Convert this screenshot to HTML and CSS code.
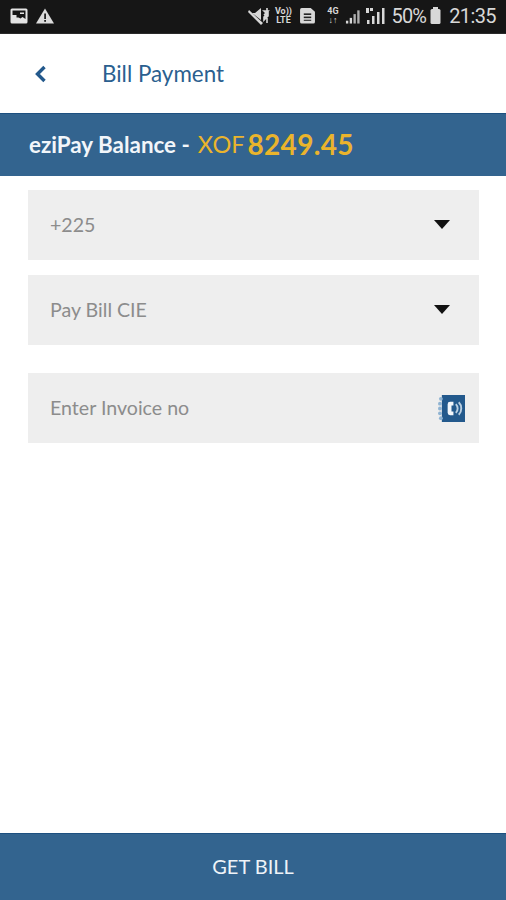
FILE: index.html
```html
<!DOCTYPE html>
<html lang="en">
<head>
<meta charset="utf-8">
<title>Bill Payment</title>
<link rel="stylesheet" href="styles.css">
</head>
<body>
<div class="screen">
  <div class="statusbar">
    <div class="status-left">
      <svg class="ic-image" viewBox="0 0 18 16"><rect x="0.5" y="0.5" width="17" height="15" rx="1.5" fill="#e4e4e4"/><path d="M2.500 2.500h13v8.500l-3-2-2 1.500-2-1H6.500V7h-4z" fill="#161616"/><rect x="10" y="4.500" width="4" height="1.500" fill="#e4e4e4"/></svg>
      <svg class="ic-warn" viewBox="0 0 18 16"><path d="M9 0.5L18 15.500H0z" fill="#dcdcdc"/><rect x="8.200" y="5.500" width="1.800" height="5.500" fill="#222"/><rect x="8.200" y="12" width="1.800" height="1.800" fill="#222"/></svg>
    </div>
    <div class="status-right">
      <svg class="ic-mute" viewBox="0 0 22 18"><path d="M1 3l14 13-2 2L0 5z" fill="#d8d8d8"/><path d="M4 6h3l6-5v12z" fill="#d8d8d8"/><path d="M16 4l2 2-2 2 4-4zM16 10l4-4v3l-4 4zM19 1v3M19 11v5" stroke="#d8d8d8" stroke-width="1.600" fill="#d8d8d8"/></svg>
      <span class="volte">Vo))<br>LTE</span>
      <svg class="ic-sim" viewBox="0 0 16 16"><path d="M1 2.500A1.500 1.500 0 0 1 2.500 1H11l4 3.500V14a1.500 1.500 0 0 1-1.500 1.500h-11A1.500 1.500 0 0 1 1 14z" fill="#d8d8d8"/><rect x="4.500" y="6" width="7" height="1.500" fill="#222"/><rect x="4.500" y="9" width="7" height="1.500" fill="#222"/><rect x="4.500" y="12" width="7" height="1" fill="#222"/></svg>
      <span class="net">4G<br>↓↑</span>
      <svg class="ic-sig" viewBox="0 0 17 16"><rect x="1" y="13" width="2.500" height="3" fill="#d8d8d8"/><rect x="5" y="10" width="2.500" height="6" fill="#d8d8d8"/><rect x="9" y="6" width="2.500" height="10" fill="#b0b0b0"/><rect x="13" y="2" width="2.500" height="14" fill="#b0b0b0"/></svg>
      <svg class="ic-sig2" viewBox="0 0 20 18"><rect x="0" y="1" width="3" height="5" fill="#d8d8d8"/><rect x="4" y="1" width="3" height="3" fill="#d8d8d8"/><rect x="1" y="13" width="2.500" height="4" fill="#d8d8d8"/><rect x="6" y="9" width="2.500" height="8" fill="#d8d8d8"/><rect x="11" y="5" width="2.500" height="12" fill="#d8d8d8"/><rect x="16" y="1" width="2.500" height="16" fill="#d8d8d8"/></svg>
      <span class="pct">50%</span>
      <svg class="ic-batt" viewBox="0 0 11 17"><rect x="3" y="0" width="5" height="2" fill="#d8d8d8"/><rect x="0.500" y="2" width="10" height="15" rx="1.500" fill="#d8d8d8"/></svg>
      <span class="clock">21:35</span>
    </div>
  </div>

  <header class="topbar">
    <svg class="back" viewBox="0 0 14 18"><path d="M11.500 2L4.500 9l7 7" fill="none" stroke="#23598c" stroke-width="3.400"/></svg>
    <h1 class="title">Bill Payment</h1>
  </header>

  <div class="balance">
    <span class="bal-label">eziPay Balance -</span>
    <span class="bal-cur">XOF</span>
    <span class="bal-amt">8249.45</span>
  </div>

  <main class="form">
    <div class="field"><span class="field-text">+225</span><span class="caret"></span></div>
    <div class="field"><span class="field-text">Pay Bill CIE</span><span class="caret"></span></div>
    <div class="field field-invoice">
      <span class="field-text">Enter Invoice no</span>
      <svg class="ic-book" viewBox="0 0 28 30">
        <rect x="4" y="1" width="24" height="28" fill="#23598c"/>
        <g fill="#8fb3d2"><circle cx="3" cy="5" r="2"/><circle cx="2" cy="10" r="2"/><circle cx="2" cy="15" r="2"/><circle cx="2" cy="20" r="2"/><circle cx="3" cy="25" r="2"/></g>
        <path d="M16 8h-3.500a2.500 2.500 0 0 0-2.500 2.500v9a2.500 2.500 0 0 0 2.500 2.500H16v-4h-2v-6h2z" fill="#f2f6fa"/>
        <path d="M18.500 10.500c2.500 2.500 2.500 6.500 0 9M21.500 8.500c3.500 3.500 3.500 9.500 0 13" fill="none" stroke="#b9cfe2" stroke-width="2"/>
      </svg>
    </div>
  </main>

  <button class="cta" type="button">GET BILL</button>
</div>
</body>
</html>
```

FILE: styles.css
```css
* { box-sizing: border-box; }
html, body { margin: 0; padding: 0; }
body { background: #fff; font-family: Lato, "Open Sans", sans-serif; }
.screen { width: 506px; height: 900px; display: flex; flex-direction: column; overflow: hidden; }

.statusbar { height: 34px; flex: none; background: #161616; border-bottom: 1px solid #2a2a2a; display: flex; justify-content: space-between; align-items: center; padding: 0 10px 2px 10px; color: #d8d8d8; }
.status-left { display: flex; align-items: center; gap: 8px; }
.ic-image { width: 18px; height: 16px; display: block; }
.ic-warn { width: 18px; height: 16px; display: block; }
.status-right { display: flex; align-items: center; font-family: Roboto, sans-serif; }
.ic-mute { width: 22px; height: 18px; display: block; margin-right: 4px; }
.volte { font-size: 9px; line-height: 9px; font-weight: 700; text-align: center; width: 18px; margin-right: 7px; white-space: nowrap; }
.ic-sim { width: 17px; height: 17px; display: block; margin-right: 9px; }
.net { font-size: 9px; line-height: 9px; font-weight: 700; text-align: center; width: 15px; margin-right: 5px; }
.ic-sig { width: 16px; height: 16px; display: block; margin-right: 5px; }
.ic-sig2 { width: 20px; height: 18px; display: block; margin-right: 5px; }
.pct { font-size: 20px; line-height: 24px; letter-spacing: -0.8px; margin-right: 4px; }
.ic-batt { width: 11px; height: 17px; display: block; margin-right: 8px; }
.clock { font-size: 20px; line-height: 24px; letter-spacing: -0.6px; }

.topbar { height: 79px; flex: none; background: #fff; display: flex; align-items: center; padding: 1px 0 0 33px; }
.back { width: 14px; height: 18px; display: block; }
.title { margin: 0 0 0 55px; font-size: 22.400px; font-weight: 400; color: #2b5f8f; line-height: 26px; }

.balance { height: 63px; flex: none; background: #33648f; border-top: 1px solid #1d5080; display: flex; align-items: center; padding: 0 0 2px 29px; }
.bal-label { color: #f2f6fa; font-size: 22.400px; font-weight: 700; }
.bal-cur { color: #eab42c; font-size: 23.500px; margin-left: 8px; }
.bal-amt { color: #eab42c; font-size: 28px; font-weight: 700; margin-left: 3px; letter-spacing: 0.3px; }

.form { flex: 1; display: flex; flex-direction: column; gap: 15px; padding: 14px 27px 0 28px; }
.field { height: 70px; background: #eeeeee; display: flex; align-items: center; justify-content: space-between; padding: 0 29px 0 22px; }
.field-invoice { margin-top: 13px; padding-right: 14px; }
.field-text { color: #8c8c8c; font-size: 19.600px; line-height: 24px; }
.caret { width: 0; height: 0; border-left: 8.500px solid transparent; border-right: 8.500px solid transparent; border-top: 9px solid #111; margin-bottom: 2px; }
.ic-book { width: 27px; height: 29px; display: block; }

.cta { height: 67px; flex: none; border: 0; border-top: 1px solid #1d5080; background: #33648f; color: #eef3f8; font-family: Lato, sans-serif; font-size: 20px; font-weight: 400; padding: 0 0 2px; width: 100%; }
```
